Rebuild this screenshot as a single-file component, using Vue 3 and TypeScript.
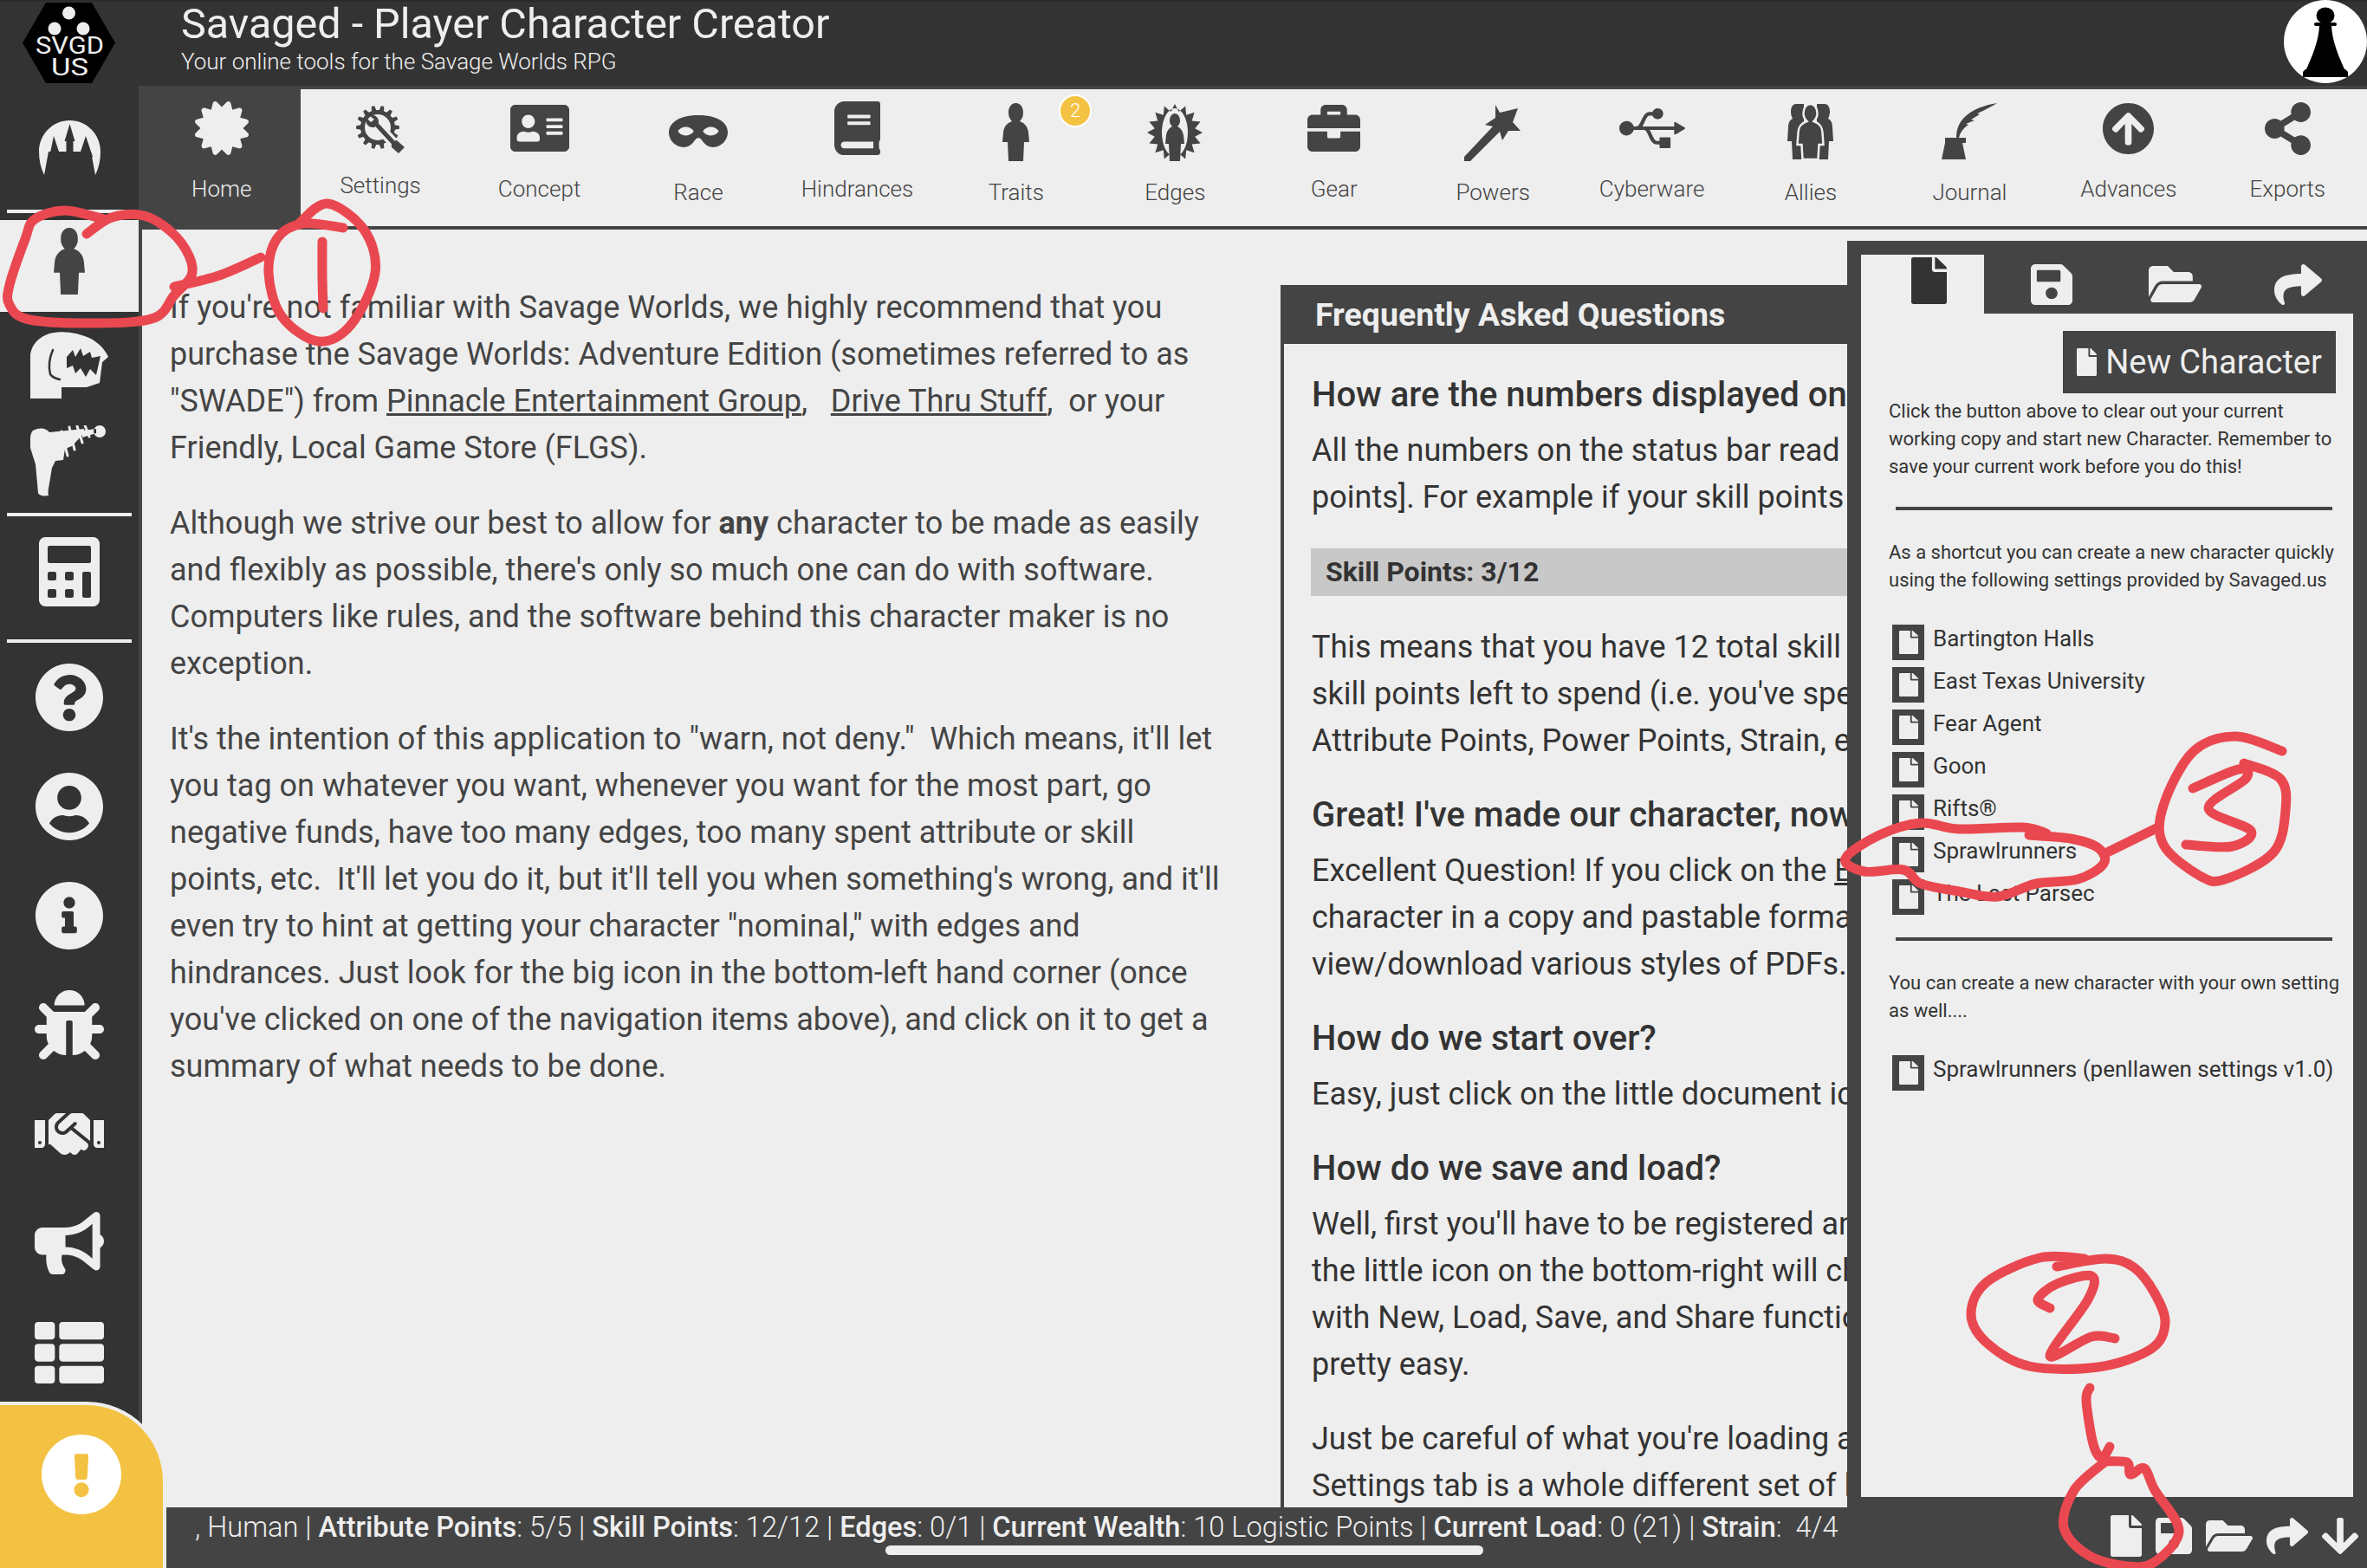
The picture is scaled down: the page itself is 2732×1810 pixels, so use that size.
<template>
  <div class="app">
    <header class="topbar">
      <svg class="logo" viewBox="0 0 107 93">
        <polygon points="27,0 80,0 107,46.5 80,93 27,93 0,46.5" fill="#000" />
        <circle cx="53.5" cy="12" r="7.5" fill="#eee" />
        <circle cx="37" cy="30" r="7.5" fill="#eee" />
        <circle cx="70" cy="30" r="7.5" fill="#eee" />
        <text x="15" y="59" textLength="79" lengthAdjust="spacingAndGlyphs" class="logo-text">SVGD</text>
        <text x="33" y="84" textLength="43" lengthAdjust="spacingAndGlyphs" class="logo-text">US</text>
      </svg>
      <div class="titles">
        <div class="title">Savaged - Player Character Creator</div>
        <div class="subtitle">Your online tools for the Savage Worlds RPG</div>
      </div>
      <svg class="avatar" viewBox="0 0 96 96">
        <circle cx="48" cy="48" r="48" fill="#fff" />
        <ellipse cx="48" cy="18" rx="10.5" ry="9.5" fill="#000" />
        <rect x="35" y="26" width="26" height="4" rx="2" fill="#000" />
        <path d="M41 30h14c1 18 8 34 15 50H26c7-16 14-32 15-50z" fill="#000" />
        <path d="M25 80h46l3 3v6H22v-6z" fill="#000" />
      </svg>
    </header>

    <div class="layout">
      <aside class="sidebar">
        <div class="side-item castle"><AppIcon :icon="icons.castle" :w="71" :h="63" /></div>
        <div class="side-line"></div>
        <div class="side-item active"><AppIcon :icon="icons.person" :w="36" :h="77" /></div>
        <div class="side-item dino"><AppIcon :icon="icons.dino" :w="90" :h="78" /></div>
        <div class="side-item gun"><AppIcon :icon="icons.gun" :w="90" :h="82" /></div>
        <div class="side-line line-two"></div>
        <div class="side-item calc"><AppIcon :icon="icons.calc" :w="70" :h="80" /></div>
        <div class="side-line line-three"></div>
        <div v-for="item in sideItems" :key="item.name" class="side-item plain" :title="item.name">
          <AppIcon :icon="item.icon" :w="item.w" :h="item.h" />
        </div>
      </aside>

      <div class="main">
        <nav class="tabs">
          <div v-for="tab in tabs" :key="tab.name" class="tab" :class="{ current: tab.name === 'Home' }">
            <div class="tab-icon">
              <AppIcon :icon="tab.icon" :w="tab.w" :h="tab.h" :style="{ marginTop: tab.top - 103 + 'px' }" />
            </div>
            <div class="tab-label" :style="{ marginTop: tab.shift + 'px' }">{{ tab.name }}</div>
            <span v-if="tab.badge" class="badge">{{ tab.badge }}</span>
          </div>
        </nav>

        <div class="content">
          <section class="intro">
            <p>
              If you're not familiar with Savage Worlds, we highly recommend that you purchase the Savage Worlds:
              Adventure Edition (sometimes referred to as "SWADE") from <a>Pinnacle Entertainment Group</a>,&nbsp;&nbsp;
              <a>Drive Thru Stuff</a>,&nbsp; or your Friendly, Local Game Store (FLGS).
            </p>
            <p>
              Although we strive our best to allow for <b>any</b> character to be made as easily and flexibly as
              possible, there's only so much one can do with software. Computers like rules, and the software behind
              this character maker is no exception.
            </p>
            <p>
              It's the intention of this application to "warn, not deny."&nbsp; Which means, it'll let you tag on
              whatever you want, whenever you want for the most part, go negative funds, have too many edges, too many
              spent attribute or skill points, etc.&nbsp; It'll let you do it, but it'll tell you when something's
              wrong, and it'll even try to hint at getting your character "nominal," with edges and hindrances. Just
              look for the big icon in the bottom-left hand corner (once you've clicked on one of the navigation items
              above), and click on it to get a summary of what needs to be done.
            </p>
          </section>

          <section class="faq">
            <h2>Frequently Asked Questions</h2>
            <div class="faq-body">
              <h3>How are the numbers displayed on</h3>
              <p>All the numbers on the status bar read<br />points]. For example if your skill points</p>
              <div class="sample">Skill Points: 3/12</div>
              <p>
                This means that you have 12 total skill<br />skill points left to spend (i.e. you've spent<br />
                Attribute Points, Power Points, Strain, etc.
              </p>
              <h3>Great! I've made our character, now</h3>
              <p>
                Excellent Question! If you click on the <a>Export</a><br />character in a copy and pastable format<br />
                view/download various styles of PDFs.
              </p>
              <h3>How do we start over?</h3>
              <p>Easy, just click on the little document icon</p>
              <h3>How do we save and load?</h3>
              <p>
                Well, first you'll have to be registered and<br />the little icon on the bottom-right will change<br />
                with New, Load, Save, and Share functions<br />pretty easy.
              </p>
              <p>Just be careful of what you're loading and<br />Settings tab is a whole different set of load</p>
            </div>
          </section>
        </div>

        <footer class="status">
          <div class="status-text">
            , Human | <b>Attribute Points</b>: 5/5 | <b>Skill Points</b>: 12/12 | <b>Edges</b>: 0/1 |
            <b>Current Wealth</b>: 10 Logistic Points | <b>Current Load</b>: 0 (21) | <b>Strain</b>:&nbsp; 4/4
          </div>
          <div class="status-icons">
            <AppIcon :icon="icons.file" :w="36" :h="48" />
            <AppIcon :icon="icons.save" :w="42" :h="42" />
            <AppIcon :icon="icons.folder" :w="54" :h="36" />
            <AppIcon :icon="icons.share" :w="48" :h="42" />
            <AppIcon :icon="icons.down" :w="42" :h="42" />
          </div>
          <div class="scroll-thumb"></div>
        </footer>
      </div>
    </div>

    <aside class="drawer">
      <div class="drawer-tabs">
        <div class="drawer-tab on"><AppIcon :icon="icons.file" :w="41" :h="54" /></div>
        <div class="drawer-tab"><AppIcon :icon="icons.save" :w="48" :h="47" /></div>
        <div class="drawer-tab"><AppIcon :icon="icons.folder" :w="61" :h="42" /></div>
        <div class="drawer-tab"><AppIcon :icon="icons.share" :w="55" :h="47" /></div>
      </div>
      <div class="drawer-body">
        <div class="new-row">
          <button class="new-btn"><AppIcon :icon="icons.file" :w="23" :h="32" /> New Character</button>
        </div>
        <p class="note">
          Click the button above to clear out your current working copy and start new Character. Remember to save your
          current work before you do this!
        </p>
        <hr />
        <p class="note">As a shortcut you can create a new character quickly using the following settings provided by Savaged.us</p>
        <ul class="settings">
          <li v-for="name in settings" :key="name">
            <span class="file-box"><AppIcon :icon="icons.file" :w="22" :h="27" /></span>{{ name }}
          </li>
        </ul>
        <hr class="hr-two" />
        <p class="note">You can create a new character with your own setting as well....</p>
        <ul class="settings">
          <li>
            <span class="file-box"><AppIcon :icon="icons.file" :w="22" :h="27" /></span>Sprawlrunners (penllawen settings v1.0)
          </li>
        </ul>
      </div>
    </aside>

    <div class="warning">
      <AppIcon :icon="icons.warn" :w="92" :h="92" />
    </div>

    <svg class="scribbles" viewBox="0 0 2732 1810">
      <path v-for="(d, i) in scribbles" :key="i" :d="d" />
    </svg>
  </div>
</template>

<script setup lang="ts">
import { defineComponent, h } from 'vue'

interface Shape {
  d: string
  fill?: string
  stroke?: string
  sw?: number
  rule?: string
}

interface Icon {
  vb: string
  shapes: Shape[]
}

const AppIcon = defineComponent({
  props: {
    icon: { type: Object as () => Icon, required: true },
    w: { type: Number, required: true },
    h: { type: Number, required: true },
  },
  setup(props) {
    return () =>
      h(
        'svg',
        { viewBox: props.icon.vb, width: props.w, height: props.h, preserveAspectRatio: 'none', class: 'app-icon' },
        props.icon.shapes.map((s) =>
          h('path', {
            d: s.d,
            fill: s.fill ?? (s.stroke ? 'none' : 'currentColor'),
            stroke: s.stroke,
            'stroke-width': s.sw,
            'stroke-linecap': s.stroke ? 'round' : undefined,
            'fill-rule': s.rule,
          }),
        ),
      )
  },
})

const fa = (vb: string, d: string): Icon => ({ vb, shapes: [{ d }] })

// toothed ring, used for the settings gear
const gearPath = (cx: number, cy: number, outer: number, inner: number, hole: number, teeth: number) => {
  let d = ''
  const step = (Math.PI * 2) / teeth
  for (let i = 0; i < teeth; i++) {
    const a = i * step
    const pts: [number, number][] = [
      [a - step * 0.3, inner],
      [a - step * 0.16, outer],
      [a + step * 0.16, outer],
      [a + step * 0.3, inner],
    ]
    pts.forEach(([t, r], j) => {
      d += `${i === 0 && j === 0 ? 'M' : 'L'}${(cx + Math.cos(t) * r).toFixed(1)} ${(cy + Math.sin(t) * r).toFixed(1)}`
    })
  }
  d += `ZM${cx - hole} ${cy}a${hole} ${hole} 0 1 0 ${hole * 2} 0a${hole} ${hole} 0 1 0 ${-hole * 2} 0Z`
  return d
}

// spiky oval for the edges icon
const burstPath = (cx: number, cy: number, rx: number, ry: number, spikes: number) => {
  let d = ''
  for (let i = 0; i < spikes * 2; i++) {
    const a = (i / (spikes * 2)) * Math.PI * 2 - Math.PI / 2
    const k = i % 2 === 0 ? 1 : 0.74
    d += `${i === 0 ? 'M' : 'L'}${(cx + Math.cos(a) * rx * k).toFixed(1)} ${(cy + Math.sin(a) * ry * k).toFixed(1)}`
  }
  return `${d}ZM${cx - 15} ${cy}a15 28 0 1 0 30 0a15 28 0 1 0 -30 0Z`
}

const personD =
  'M15.5 0C10 0 7 5 7 11c0 5 2 8 4 10C5 23 1.5 28 1 34L0 45h6l1 22h17l1-22h6l-1-11c-.5-6-4-11-10-13 2-2 4-5 4-10C24 5 21 0 15.5 0z'

const icons: Record<string, Icon> = {
  person: { vb: '0 0 31 67', shapes: [{ d: personD }] },
  castle: {
    vb: '0 0 71 63',
    shapes: [
      { d: 'M35.5 0C16 0 0 16 0 36c0 10 2 19 6 27l5-27h49l5 27c4-8 6-17 6-27C71 16 55 0 35.5 0z', fill: '#eee' },
      { d: 'M35.5 4l6 20h-2v20h-8V24h-2z', fill: '#333' },
      { d: 'M17 18l8 24-1 2h23l-1-2 8-24 8 24-2 2 3 19H11l3-19-2-2z', fill: '#333' },
    ],
  },
  dino: {
    vb: '0 0 90 78',
    shapes: [
      { d: 'M0 78V27C2 15 10 7 22 3 38-1 55 2 70 9c9 5 16 12 20 21l-7 6-3 24-15 5-29 0v13z', fill: '#eee' },
      {
        d: 'M42 30l7-8 3 8 6-10 3 9 8-5 2 7 10-2-5 22-7-7-5 9-6-10-6 6-3-9-7 3z',
        fill: '#333',
      },
      { d: 'M26 22c-4 9-5 20-3 28 2 3 6 5 11 6', stroke: '#333', sw: 2.5 },
    ],
  },
  gun: {
    vb: '0 0 90 82',
    shapes: [
      {
        d: 'M3 6c8-4 15-3 19 2l40-4v5L48 24l-8 3-2 13-9 1-4 8-3 18c-1 6-2 10-1 14-6 1-11 0-12-3L6 45 0 26C-1 16 0 9 3 6z',
        fill: '#eee',
      },
      { d: 'M45 2l6 26M54 1l6 19M63 0l5 13M36 7l7 28', stroke: '#eee', sw: 3 },
      { d: 'M80 0a7 7 0 1 0 .1 14A7 7 0 0 0 80 0zM60 6l16-2v5l-16 5z', fill: '#eee' },
    ],
  },
  calc: fa(
    '0 0 448 512',
    'M400 0H48C22.4 0 0 22.4 0 48v416c0 25.6 22.4 48 48 48h352c25.6 0 48-22.4 48-48V48c0-25.6-22.4-48-48-48zM128 435.2c0 6.4-6.4 12.8-12.8 12.8H76.8c-6.4 0-12.8-6.4-12.8-12.8v-38.4c0-6.4 6.4-12.8 12.8-12.8h38.4c6.4 0 12.8 6.4 12.8 12.8v38.4zm0-128c0 6.4-6.4 12.8-12.8 12.8H76.8c-6.4 0-12.8-6.4-12.8-12.8v-38.4c0-6.4 6.4-12.8 12.8-12.8h38.4c6.4 0 12.8 6.4 12.8 12.8v38.4zm128 128c0 6.4-6.4 12.8-12.8 12.8h-38.4c-6.4 0-12.8-6.4-12.8-12.8v-38.4c0-6.4 6.4-12.8 12.8-12.8h38.4c6.4 0 12.8 6.4 12.8 12.8v38.4zm0-128c0 6.4-6.4 12.8-12.8 12.8h-38.4c-6.4 0-12.8-6.4-12.8-12.8v-38.4c0-6.4 6.4-12.8 12.8-12.8h38.4c6.4 0 12.8 6.4 12.8 12.8v38.4zm128 128c0 6.4-6.4 12.8-12.8 12.8h-38.4c-6.4 0-12.8-6.4-12.8-12.8V268.8c0-6.4 6.4-12.8 12.8-12.8h38.4c6.4 0 12.8 6.4 12.8 12.8v166.4zm0-256c0 6.4-6.4 12.8-12.8 12.8H76.8c-6.4 0-12.8-6.4-12.8-12.8V76.8C64 70.4 70.4 64 76.8 64h294.4c6.4 0 12.8 6.4 12.8 12.8v102.4z',
  ),
  file: fa(
    '0 0 384 512',
    'M224 136V0H24C10.7 0 0 10.7 0 24v464c0 13.3 10.7 24 24 24h336c13.3 0 24-10.7 24-24V160H248c-13.2 0-24-10.8-24-24zm160-14.1v6.1H256V0h6.1c6.4 0 12.5 2.5 17 7l97.9 98c4.5 4.5 7 10.6 7 16.9z',
  ),
  save: fa(
    '0 32 448 448',
    'M433.941 129.941l-83.882-83.882A48 48 0 0 0 316.118 32H48C21.49 32 0 53.49 0 80v352c0 26.51 21.49 48 48 48h352c26.51 0 48-21.49 48-48V163.882a48 48 0 0 0-14.059-33.941zM224 416c-35.346 0-64-28.654-64-64 0-35.346 28.654-64 64-64s64 28.654 64 64c0 35.346-28.654 64-64 64zm96-304.52V212c0 6.627-5.373 12-12 12H76c-6.627 0-12-5.373-12-12V108c0-6.627 5.373-12 12-12h228.52c3.183 0 6.235 1.264 8.485 3.515l3.48 3.48A11.996 11.996 0 0 1 320 111.48z',
  ),
  folder: fa(
    '0 64 576 384',
    'M572.694 292.093L500.27 416.248A63.997 63.997 0 0 1 444.989 448H45.025c-18.523 0-30.064-20.093-20.731-36.093l72.424-124.155A64 64 0 0 1 152 256h399.964c18.523 0 30.064 20.093 20.73 36.093zM152 224h328v-48c0-26.51-21.49-48-48-48H272l-64-64H48C21.49 64 0 85.49 0 112v278.046l69.077-118.418C86.214 242.25 117.989 224 152 224z',
  ),
  share: fa(
    '0 32 512 448',
    'M503.691 189.836L327.687 37.851C312.281 24.546 288 35.347 288 56.015v80.053C127.371 137.907 0 170.1 0 322.326c0 61.441 39.581 122.309 83.333 154.132 13.653 9.931 33.111-2.533 28.077-18.631C66.066 312.814 132.917 274.316 288 272.085V360c0 20.7 24.3 31.453 39.687 18.164l176.004-152c11.071-9.562 11.086-26.753 0-36.328z',
  ),
  down: fa(
    '6 32 436 448',
    'M413.1 222.5l22.2 22.2c9.4 9.4 9.4 24.6 0 33.9L241 473c-9.4 9.4-24.6 9.4-33.9 0L12.7 278.6c-9.4-9.4-9.4-24.6 0-33.9l22.2-22.2c9.5-9.5 25-9.3 34.3.4L184 343.4V56c0-13.3 10.7-24 24-24h32c13.3 0 24 10.7 24 24v287.4l114.8-120.5c9.3-9.8 24.8-10 34.3-.4z',
  ),
  warn: fa(
    '8 8 496 496',
    'M504 256c0 136.997-111.043 248-248 248S8 392.997 8 256C8 119.083 119.043 8 256 8s248 111.083 248 248zm-248 50c-25.405 0-46 20.595-46 46s20.595 46 46 46 46-20.595 46-46-20.595-46-46-46zm-43.673-165.346l7.418 136c.347 6.364 5.609 11.346 11.982 11.346h48.546c6.373 0 11.635-4.982 11.982-11.346l7.418-136c.375-6.874-5.098-12.654-11.982-12.654h-63.383c-6.884 0-12.356 5.78-11.981 12.654z',
  ),
}

const sideItems = [
  {
    name: 'help',
    w: 78,
    h: 78,
    icon: fa(
      '8 8 496 496',
      'M504 256c0 136.997-111.043 248-248 248S8 392.997 8 256C8 119.083 119.043 8 256 8s248 111.083 248 248zM262.655 90c-54.497 0-89.255 22.957-116.549 63.758-3.536 5.286-2.353 12.415 2.715 16.258l34.699 26.31c5.205 3.947 12.621 3.008 16.665-2.122 17.864-22.658 30.113-35.797 57.303-35.797 20.429 0 45.698 13.148 45.698 32.958 0 14.976-12.363 22.667-32.534 33.976C247.128 238.528 216 254.941 216 296v4c0 6.627 5.373 12 12 12h56c6.627 0 12-5.373 12-12v-1.333c0-28.462 83.186-29.647 83.186-106.667 0-58.002-60.165-102-116.531-102zM256 338c-25.365 0-46 20.635-46 46 0 25.364 20.635 46 46 46s46-20.636 46-46c0-25.365-20.635-46-46-46z',
    ),
  },
  {
    name: 'user',
    w: 78,
    h: 78,
    icon: fa(
      '0 8 496 496',
      'M248 8C111 8 0 119 0 256s111 248 248 248 248-111 248-248S385 8 248 8zm0 96c48.6 0 88 39.4 88 88s-39.4 88-88 88-88-39.4-88-88 39.4-88 88-88zm0 344c-58.7 0-111.3-26.6-146.5-68.2 18.8-35.4 55.6-59.8 98.5-59.8 2.4 0 4.8.4 7.1 1.1 13 4.2 26.6 6.9 40.9 6.9 14.3 0 28-2.7 40.9-6.9 2.3-.7 4.7-1.1 7.1-1.1 42.9 0 79.7 24.4 98.5 59.8C359.3 421.4 306.7 448 248 448z',
    ),
  },
  {
    name: 'info',
    w: 78,
    h: 78,
    icon: fa(
      '8 8 496 496',
      'M256 8C119.043 8 8 119.083 8 256c0 136.997 111.043 248 248 248s248-111.003 248-248C504 119.083 392.957 8 256 8zm0 110c23.196 0 42 18.804 42 42s-18.804 42-42 42-42-18.804-42-42 18.804-42 42-42zm56 254c0 6.627-5.373 12-12 12h-88c-6.627 0-12-5.373-12-12v-24c0-6.627 5.373-12 12-12h12v-64h-12c-6.627 0-12-5.373-12-12v-24c0-6.627 5.373-12 12-12h64c6.627 0 12 5.373 12 12v100h12c6.627 0 12 5.373 12 12v24z',
    ),
  },
  {
    name: 'bug',
    w: 80,
    h: 80,
    icon: fa(
      '0 0 512 512',
      'M511.988 288.9c-.478 17.43-15.217 31.1-32.653 31.1H424v16c0 21.864-4.882 42.584-13.6 61.145l60.228 60.228c12.496 12.497 12.496 32.758 0 45.255-12.498 12.497-32.759 12.496-45.256 0l-54.736-54.736C345.886 467.965 314.351 480 280 480V236c0-6.627-5.373-12-12-12h-24c-6.627 0-12 5.373-12 12v244c-34.351 0-65.886-12.035-90.636-32.108l-54.736 54.736c-12.498 12.497-32.759 12.496-45.256 0-12.496-12.497-12.496-32.758 0-45.255l60.228-60.228C92.882 378.584 88 357.864 88 336v-16H32.666C15.23 320 .491 306.33.013 288.9-.484 270.816 14.028 256 32 256h56v-58.745l-46.628-46.628c-12.496-12.497-12.496-32.758 0-45.255 12.498-12.497 32.758-12.497 45.256 0L141.255 160h229.489l54.627-54.627c12.498-12.497 32.758-12.497 45.256 0 12.496 12.497 12.496 32.758 0 45.255L424 197.255V256h56c17.972 0 32.484 14.816 31.988 32.9zM257 0c-61.856 0-112 50.144-112 112h224C369 50.144 318.856 0 257 0z',
    ),
  },
  {
    name: 'partners',
    w: 80,
    h: 48,
    icon: fa(
      '0 64 640 384',
      'M434.7 64h-85.9c-8 0-15.7 3-21.6 8.4l-98.3 90c-.1.1-.2.3-.3.4-16.6 15.6-16.3 40.5-2.1 56 12.7 13.9 39.4 17.6 56.1 2.7.1-.1.3-.1.4-.2l79.9-73.2c6.5-5.9 16.7-5.5 22.6 1 6 6.5 5.5 16.6-1 22.6l-26.1 23.9L504 313.8c2.9 2.4 5.5 5 7.9 7.7V128l-54.6-54.6c-5.9-6-14.1-9.4-22.6-9.4zM544 128.2v223.9c0 17.7 14.3 32 32 32h64V128.2h-96zm48 223.9c-8.8 0-16-7.2-16-16s7.2-16 16-16 16 7.2 16 16-7.2 16-16 16zM0 384h64c17.7 0 32-14.3 32-32V128.2H0V384zm48-63.9c8.8 0 16 7.2 16 16s-7.2 16-16 16-16-7.2-16-16c0-8.9 7.2-16 16-16zm435.9 18.6L334.6 217.5l-30 27.5c-29.7 27.1-75.2 24.5-101.7-4.4-26.9-29.4-24.8-74.9 4.4-101.7L289.1 64h-83.8c-8.5 0-16.6 3.4-22.6 9.4L128 128v223.9h18.3l90.5 81.9c27.4 22.3 67.7 18.1 90-9.3l.2-.2 17.9 15.5c15.9 13 39.4 10.5 52.3-5.4l31.4-38.6 5.4 4.4c13.7 11.1 33.9 9.1 45-4.7l9.5-11.7c11.2-13.8 9.1-33.9-4.6-45.1z',
    ),
  },
  {
    name: 'news',
    w: 80,
    h: 72,
    icon: fa(
      '0 0 576 512',
      'M576 240c0-23.63-12.95-44.04-32-55.12V32.01C544 23.26 537.02 0 512 0c-7.12 0-14.19 2.38-19.98 7.02l-85.03 68.03C364.28 109.19 310.22 128 256 128H64c-35.35 0-64 28.65-64 64v96c0 35.35 28.65 64 64 64h33.7c-1.39 10.48-2.18 21.14-2.18 32 0 39.77 9.26 77.35 25.56 110.94 5.19 10.69 16.52 17.06 28.4 17.06h74.28c26.05 0 41.69-29.84 25.9-50.56-16.4-21.52-26.15-48.36-26.15-77.44 0-11.11 1.62-21.79 4.41-32H256c54.22 0 108.28 18.81 150.98 52.95l85.03 68.03a32.023 32.023 0 0 0 19.98 7.02c24.92 0 32-22.78 32-32V295.13C563.05 284.04 576 263.63 576 240zm-96 141.42l-33.05-26.44C392.95 311.78 325.12 288 256 288v-96c69.12 0 136.95-23.78 190.95-66.98L480 98.58v282.84z',
    ),
  },
  {
    name: 'list',
    w: 80,
    h: 71,
    icon: fa(
      '0 32 512 448',
      'M149.333 216v80c0 13.255-10.745 24-24 24H24c-13.255 0-24-10.745-24-24v-80c0-13.255 10.745-24 24-24h101.333c13.255 0 24 10.745 24 24zM0 376v80c0 13.255 10.745 24 24 24h101.333c13.255 0 24-10.745 24-24v-80c0-13.255-10.745-24-24-24H24c-13.255 0-24 10.745-24 24zM125.333 32H24C10.745 32 0 42.745 0 56v80c0 13.255 10.745 24 24 24h101.333c13.255 0 24-10.745 24-24V56c0-13.255-10.745-24-24-24zm80 448H488c13.255 0 24-10.745 24-24v-80c0-13.255-10.745-24-24-24H205.333c-13.255 0-24 10.745-24 24v80c0 13.255 10.745 24 24 24zm-24-424v80c0 13.255 10.745 24 24 24H488c13.255 0 24-10.745 24-24V56c0-13.255-10.745-24-24-24H205.333c-13.255 0-24 10.745-24 24zm24 264H488c13.255 0 24-10.745 24-24v-80c0-13.255-10.745-24-24-24H205.333c-13.255 0-24 10.745-24 24v80c0 13.255 10.745 24 24 24z',
    ),
  },
]

const tabs: { name: string; icon: Icon; w: number; h: number; top: number; shift: number; badge?: number }[] = [
  {
    name: 'Home',
    w: 62,
    h: 62,
    top: 117,
    shift: 0,
    icon: fa(
      '0 0 512 512',
      'M458.622 255.92l45.985-45.005c13.708-12.977 7.316-36.039-10.664-40.339l-62.65-15.99 17.661-62.015c4.991-17.838-11.829-34.663-29.661-29.671l-61.994 17.667-15.984-62.671C337.085.197 313.765-6.276 300.99 7.228L256 53.57 211.011 7.229c-12.63-13.351-36.047-7.234-40.325 10.668l-15.984 62.671-61.995-17.667C74.87 57.907 58.056 74.738 63.046 92.572l17.661 62.015-62.65 15.99C.069 174.878-6.31 197.944 7.392 210.915l45.985 45.005-45.985 45.004c-13.708 12.977-7.316 36.039 10.664 40.339l62.65 15.99-17.661 62.015c-4.991 17.838 11.829 34.663 29.661 29.671l61.994-17.667 15.984 62.671c4.439 18.575 27.696 24.018 40.325 10.668L256 458.61l44.989 46.001c12.5 13.488 35.987 7.486 40.325-10.668l15.984-62.671 61.994 17.667c17.836 4.994 34.651-11.837 29.661-29.671l-17.661-62.015 62.65-15.99c17.987-4.302 24.366-27.367 10.664-40.339l-45.984-45.004z',
    ),
  },
  {
    name: 'Settings',
    w: 56,
    h: 56,
    top: 122,
    shift: -4,
    icon: {
      vb: '0 0 56 56',
      shapes: [
        { d: gearPath(25, 25, 25, 20, 15, 14), rule: 'evenodd' },
        { d: 'M22 20l24 26', stroke: '#eee', sw: 12 },
        { d: 'M22 20l25 27', stroke: 'currentColor', sw: 5 },
        { d: 'M15 11c5-2 12 2 11 9l-5 5c-7 1-11-5-9-11l5 5 4-3z' },
        { d: 'M47 40c-4 0-7 4-6 8l8 7 7-7z' },
      ],
    },
  },
  {
    name: 'Concept',
    w: 68,
    h: 54,
    top: 121,
    shift: 0,
    icon: fa(
      '0 32 576 448',
      'M528 32H48C21.5 32 0 53.5 0 80v352c0 26.5 21.5 48 48 48h480c26.5 0 48-21.5 48-48V80c0-26.5-21.5-48-48-48zm-352 96c35.3 0 64 28.7 64 64s-28.7 64-64 64-64-28.7-64-64 28.7-64 64-64zm112 236.8c0 10.6-10 19.2-22.4 19.2H86.4C74 384 64 375.4 64 364.8v-19.2c0-31.8 30.1-57.6 67.2-57.6h5c12.3 5.1 25.7 8 39.8 8s27.6-2.9 39.8-8h5c37.1 0 67.2 25.8 67.2 57.6v19.2zM512 312c0 4.4-3.6 8-8 8H360c-4.4 0-8-3.6-8-8v-16c0-4.4 3.6-8 8-8h144c4.4 0 8 3.6 8 8v16zm0-64c0 4.4-3.6 8-8 8H360c-4.4 0-8-3.6-8-8v-16c0-4.4 3.6-8 8-8h144c4.4 0 8 3.6 8 8v16zm0-64c0 4.4-3.6 8-8 8H360c-4.4 0-8-3.6-8-8v-16c0-4.4 3.6-8 8-8h144c4.4 0 8 3.6 8 8v16z',
    ),
  },
  {
    name: 'Race',
    w: 68,
    h: 37,
    top: 133,
    shift: 4,
    icon: fa(
      '0 64 640 384',
      'M320.67 64c-442.6 0-357.57 384-158.46 384 39.9 0 77.47-20.69 101.42-55.86l25.73-37.79c15.66-22.99 46.97-22.99 62.63 0l25.73 37.79C401.66 427.31 439.23 448 479.13 448c189.86 0 290.63-384-158.46-384zM184 308.36c-41.06 0-67.76-25.66-80.08-41.05-5.23-6.53-5.23-16.09 0-22.63 12.32-15.4 39.01-41.05 80.08-41.05s67.76 25.66 80.08 41.05c5.23 6.53 5.23 16.09 0 22.63-12.32 15.39-39.02 41.05-80.08 41.05zm272 0c-41.06 0-67.76-25.66-80.08-41.05-5.23-6.53-5.23-16.09 0-22.63 12.32-15.4 39.01-41.05 80.08-41.05s67.76 25.66 80.08 41.05c5.23 6.53 5.23 16.09 0 22.63-12.32 15.39-39.02 41.05-80.08 41.05z',
    ),
  },
  {
    name: 'Hindrances',
    w: 53,
    h: 62,
    top: 117,
    shift: 0,
    icon: fa(
      '0 0 448 512',
      'M448 360V24c0-13.3-10.7-24-24-24H96C43 0 0 43 0 96v320c0 53 43 96 96 96h328c13.3 0 24-10.7 24-24v-16c0-7.5-3.5-14.3-8.9-18.7-4.2-15.4-4.2-59.3 0-74.7 5.4-4.3 8.9-11.1 8.9-18.6zM128 134c0-3.3 2.7-6 6-6h212c3.3 0 6 2.7 6 6v20c0 3.3-2.7 6-6 6H134c-3.3 0-6-2.7-6-6v-20zm0 64c0-3.3 2.7-6 6-6h212c3.3 0 6 2.7 6 6v20c0 3.3-2.7 6-6 6H134c-3.3 0-6-2.7-6-6v-20zm253.4 250H96c-17.7 0-32-14.3-32-32 0-17.6 14.4-32 32-32h285.4c-1.9 17.1-1.9 46.9 0 64z',
    ),
  },
  { name: 'Traits', w: 31, h: 67, top: 119, shift: 4, badge: 2, icon: icons.person },
  {
    name: 'Edges',
    w: 64,
    h: 66,
    top: 120,
    shift: 4,
    icon: {
      vb: '0 0 64 66',
      shapes: [
        { d: burstPath(32, 33, 32, 33, 16), rule: 'evenodd' },
        { d: 'M32 11c-3.5 0-6 4-6 8 0 3 1 5 3 7-4 2-6 5-7 10l-1 10h4l1 20h12l1-20h4l-1-10c-1-5-3-8-7-10 2-2 3-4 3-7 0-4-2.5-8-6-8z' },
      ],
    },
  },
  {
    name: 'Gear',
    w: 61,
    h: 54,
    top: 121,
    shift: 0,
    icon: fa(
      '0 32 512 448',
      'M320 336c0 8.84-7.16 16-16 16h-96c-8.84 0-16-7.16-16-16v-48H0v144c0 25.6 22.4 48 48 48h416c25.6 0 48-22.4 48-48V288H320v48zm144-208h-80V80c0-25.6-22.4-48-48-48H176c-25.6 0-48 22.4-48 48v48H48c-25.6 0-48 22.4-48 48v80h512v-80c0-25.6-22.4-48-48-48zm-144 0H192V96h128v32z',
    ),
  },
  {
    name: 'Powers',
    w: 67,
    h: 65,
    top: 121,
    shift: 4,
    icon: {
      vb: '0 0 67 65',
      shapes: [{ d: 'M36 0l5 9 21-5-6 16 9 10-14 0-7 11-3-10L7 65H0v-5l33-35-9-2 12-8z' }],
    },
  },
  {
    name: 'Cyberware',
    w: 76,
    h: 46,
    top: 125,
    shift: 0,
    icon: fa(
      '0 60 641.5 392',
      'M641.5 256c0 3.1-1.7 6.1-4.5 7.5L547.9 317c-1.4.8-2.8 1.4-4.5 1.4-1.4 0-3.1-.3-4.5-1.1-2.8-1.7-4.5-4.5-4.5-7.8v-35.6H295.7c25.3 39.6 40.5 106.9 69.6 106.9H392V354c0-5 3.9-8.9 8.9-8.9H490c5 0 8.9 3.9 8.9 8.9v89.1c0 5-3.9 8.9-8.9 8.9h-89.1c-5 0-8.9-3.9-8.9-8.9v-26.7h-26.7c-75.4 0-81.1-142.5-124.7-142.5H140.3c-8.1 30.6-35.9 53.5-69 53.5C32 327.3 0 295.3 0 256s32-71.3 71.3-71.3c33.1 0 61 22.8 69 53.5 39.1 0 43.9 9.5 74.6-60.4C255 88.7 273 95.7 323.8 95.7c7.5-20.9 27-35.6 50.4-35.6 29.5 0 53.5 23.9 53.5 53.5s-23.9 53.5-53.5 53.5c-23.4 0-42.9-14.8-50.4-35.6H294c-29.1 0-44 67.4-69.3 106.9h310.1v-35.6c0-3.3 1.7-6.1 4.5-7.8 2.8-1.7 6.4-1.4 8.9.3l89.1 53.5c2.8 1.1 4.5 4.1 4.5 7.2z',
    ),
  },
  {
    name: 'Allies',
    w: 53,
    h: 64,
    top: 120,
    shift: 4,
    icon: {
      vb: '0 0 53 64',
      shapes: [
        {
          d: 'M10 0c-4 0-6 4-6 9 0 3 1 6 2 8-4 2-5 6-5 10L0 43h5l1 21h13V0zM43 0c4 0 6 4 6 9 0 3-1 6-2 8 4 2 5 6 5 10l1 16h-5l-1 21H34V0z',
        },
        {
          d: 'M26.5 0c-5 0-8 5-8 11 0 4 2 7 4 9-6 2-10 7-10 13l-1 14h5l1 17h18l1-17h5l-1-14c0-6-4-11-10-13 2-2 4-5 4-9 0-6-3-11-8-11z',
          stroke: '#eee',
          sw: 2.5,
          fill: 'currentColor',
        },
      ],
    },
  },
  {
    name: 'Journal',
    w: 64,
    h: 65,
    top: 119,
    shift: 4,
    icon: {
      vb: '0 0 64 65',
      shapes: [
        { d: 'M64 0C46 3 32 9 24 19c-5 6-7 13-7 21h3c2-7 5-11 11-15l-3-1 10-4-4-1 10-6-3-1C48 9 56 5 64 0z' },
        { d: 'M4 40h24v6h-4l4 19H0l4-19H4z' },
      ],
    },
  },
  {
    name: 'Advances',
    w: 59,
    h: 59,
    top: 119,
    shift: 0,
    icon: fa(
      '8 8 496 496',
      'M8 256C8 119 119 8 256 8s248 111 248 248-111 248-248 248S8 393 8 256zm143.6 28.9l72.4-75.5V392c0 13.3 10.7 24 24 24h16c13.3 0 24-10.7 24-24V209.4l72.4 75.5c9.3 9.7 24.8 9.9 34.3.4l10.9-11c9.4-9.4 9.4-24.6 0-33.9L273 107.7c-9.4-9.4-24.6-9.4-33.9 0L106.3 240.4c-9.4 9.4-9.4 24.6 0 33.9l10.9 11c9.6 9.5 25.1 9.3 34.4-.4z',
    ),
  },
  {
    name: 'Exports',
    w: 53,
    h: 61,
    top: 118,
    shift: 0,
    icon: fa(
      '0 0 448 512',
      'M352 320c-22.608 0-43.387 7.819-59.79 20.895l-102.486-64.054a96.551 96.551 0 0 0 0-41.683l102.486-64.054C308.613 184.181 329.392 192 352 192c53.019 0 96-42.981 96-96S405.019 0 352 0s-96 42.981-96 96c0 7.158.79 14.13 2.276 20.841L155.79 180.895C139.387 167.819 118.608 160 96 160c-53.019 0-96 42.981-96 96s42.981 96 96 96c22.608 0 43.387-7.819 59.79-20.895l102.486 64.054A96.301 96.301 0 0 0 256 416c0 53.019 42.981 96 96 96s96-42.981 96-96-42.981-96-96-96z',
    ),
  },
]

const settings = [
  'Bartington Halls',
  'East Texas University',
  'Fear Agent',
  'Goon',
  'Rifts®',
  'Sprawlrunners',
  'The Last Parsec',
]

// pen marks drawn over the screenshot
const smooth = (pts: number[][]) => {
  let d = `M${pts[0][0]} ${pts[0][1]}`
  for (let i = 0; i < pts.length - 1; i++) {
    const p0 = pts[Math.max(i - 1, 0)]
    const p1 = pts[i]
    const p2 = pts[i + 1]
    const p3 = pts[Math.min(i + 2, pts.length - 1)]
    const c1x = p1[0] + (p2[0] - p0[0]) / 6
    const c1y = p1[1] + (p2[1] - p0[1]) / 6
    const c2x = p2[0] - (p3[0] - p1[0]) / 6
    const c2y = p2[1] - (p3[1] - p1[1]) / 6
    d += `C${c1x.toFixed(1)} ${c1y.toFixed(1)} ${c2x.toFixed(1)} ${c2y.toFixed(1)} ${p2[0]} ${p2[1]}`
  }
  return d
}

const scribbles = [
  [[100, 270], [129, 251], [166, 249], [198, 268], [218, 295], [221, 318], [201, 341], [178, 367], [115, 373], [34, 369], [11, 352], [11, 329], [29, 276], [40, 253], [75, 243], [120, 253]],
  [[201, 331], [253, 318], [301, 297]],
  [[396, 263], [350, 258], [320, 275], [310, 315], [325, 365], [367, 394], [405, 375], [433, 315], [420, 265], [378, 235], [345, 258]],
  [[372, 279], [372, 320], [373, 356]],
  [[2362, 962], [2334, 955], [2261, 957], [2217, 950], [2169, 964], [2130, 991], [2152, 1006], [2197, 1004], [2217, 1020], [2261, 1029], [2306, 1035], [2350, 1020], [2398, 1015], [2428, 997], [2422, 979], [2390, 968], [2342, 964]],
  [[2428, 986], [2489, 956]],
  [[2634, 867], [2580, 850], [2531, 868], [2497, 930], [2497, 975], [2539, 1011], [2568, 1015], [2624, 984], [2638, 935], [2632, 899], [2590, 881]],
  [[2531, 910], [2584, 888], [2592, 899], [2549, 933], [2598, 959], [2576, 977], [2523, 975]],
  [[2374, 1462], [2430, 1453], [2463, 1463], [2487, 1493], [2499, 1527], [2483, 1557], [2422, 1578], [2342, 1577], [2293, 1550], [2275, 1517], [2293, 1480], [2354, 1452], [2406, 1453]],
  [[2366, 1510], [2352, 1500], [2374, 1482], [2414, 1473], [2410, 1500], [2366, 1565], [2414, 1543], [2441, 1545]],
  [[2412, 1602], [2408, 1617], [2416, 1667], [2426, 1683], [2435, 1670]],
  [[2430, 1687], [2394, 1720], [2382, 1763], [2410, 1795], [2455, 1808], [2487, 1803], [2515, 1767], [2487, 1720], [2475, 1695], [2459, 1702], [2455, 1688], [2430, 1687]],
].map(smooth)
</script>

<style scoped>
.app {
  position: relative;
  width: 2732px;
  height: 1810px;
  overflow: hidden;
  background: #eee;
  color: #333;
  font-family: Roboto, "Liberation Sans", sans-serif;
  font-size: 36px;
  line-height: 54px;
}

.topbar {
  height: 99px;
  background: #333;
  box-shadow: inset 0 2px #2b2b2b;
  display: flex;
  color: #eee;
}
.logo {
  width: 107px;
  height: 93px;
  margin: 3px 76px 0 26px;
  flex: none;
}
.logo-text {
  font-size: 28px;
  fill: #eee;
}
.titles {
  flex: 1;
}
.title {
  font-size: 48.5px;
  line-height: 56px;
}
.subtitle {
  font-size: 26px;
  font-weight: 300;
  line-height: 34px;
  margin-top: -2px;
}
.avatar {
  width: 96px;
  height: 96px;
  flex: none;
}

.layout {
  display: flex;
  height: 1711px;
}

.sidebar {
  width: 160px;
  flex: none;
  background: #333;
  border-right: 4px solid #444;
  color: #eee;
  display: flex;
  flex-direction: column;
}
.side-item {
  display: flex;
  align-items: center;
  justify-content: center;
}
.castle {
  height: 143px;
}
.side-line {
  height: 4px;
  background: #eee;
  margin: 0 8px 8px;
  flex: none;
}
.active {
  height: 106px;
  background: #eee;
  color: #444;
  padding-bottom: 12px;
  box-sizing: border-box;
}
.dino {
  height: 122px;
}
.gun {
  height: 100px;
  margin-bottom: 10px;
}
.line-two {
  margin-bottom: 0;
}
.calc {
  height: 128px;
  margin-bottom: 14px;
}
.line-three {
  margin-bottom: 0;
}
.plain {
  height: 126px;
  flex: none;
}

.main {
  flex: 1;
  min-width: 0;
  display: flex;
  flex-direction: column;
}

.tabs {
  height: 166px;
  box-sizing: border-box;
  border-top: 4px solid #444;
  border-bottom: 4px solid #444;
  display: grid;
  grid-template-columns: repeat(14, 1fr);
  flex: none;
}
.tab {
  position: relative;
  text-align: center;
  color: #444;
}
.tab.current {
  background: #444;
  color: #eee;
  margin-left: -3px;
  padding-left: 3px;
}
.tab-icon {
  height: 98px;
  display: flex;
  justify-content: center;
  align-items: flex-start;
}
.tab-label {
  font-size: 26px;
  font-weight: 300;
  line-height: 34px;
}
.badge {
  position: absolute;
  left: 141px;
  top: 6px;
  width: 34px;
  height: 34px;
  border: 2px solid #fff;
  border-radius: 50%;
  background: #f4c242;
  color: #fff;
  font-size: 22px;
  font-weight: 300;
  line-height: 34px;
}

.content {
  flex: 1;
  min-height: 0;
  display: flex;
  overflow: hidden;
}
.intro {
  width: 1247px;
  flex: none;
  padding: 63px 0 0 32px;
  box-sizing: border-box;
  margin-right: 67px;
  color: #444;
}
.intro p {
  margin: 0 0 33px;
}
.intro a,
.faq a {
  text-decoration: underline;
}
.intro b {
  font-weight: 700;
}

.faq {
  flex: 1;
  margin-top: 64px;
  border-left: 4px solid #444;
  white-space: nowrap;
  min-width: 0;
}
.faq h2 {
  margin: 0;
  height: 68px;
  background: #444;
  color: #eee;
  font-size: 37.5px;
  font-weight: 700;
  line-height: 68px;
  padding-left: 36px;
}
.faq-body {
  padding-left: 32px;
}
.faq h3 {
  margin: 32px 0 10px;
  font-size: 40px;
  font-weight: 500;
  line-height: 54px;
}
.faq p {
  margin: 0 0 32px;
}
.sample {
  height: 55px;
  background: #c8c8c8;
  margin: 32px 0 32px -1px;
  padding-left: 17px;
  font-size: 32px;
  font-weight: 700;
  line-height: 55px;
}

.status {
  position: relative;
  height: 70px;
  flex: none;
  margin-left: 28px;
  background: #444;
  color: #eee;
  display: flex;
  justify-content: space-between;
  z-index: 3;
}
.status-text {
  padding-left: 33px;
  font-size: 32.6px;
  font-weight: 300;
  line-height: 46px;
  white-space: nowrap;
}
.status-text b {
  font-weight: 500;
}
.status-icons {
  display: flex;
  align-items: center;
  gap: 16px;
  padding: 0 10px 4px 0;
}
.scroll-thumb {
  position: absolute;
  left: 830px;
  top: 44px;
  width: 690px;
  height: 11px;
  border-radius: 6px;
  background: #eee;
}

.drawer {
  position: absolute;
  left: 2132px;
  top: 278px;
  width: 600px;
  height: 1462px;
  box-sizing: border-box;
  padding: 16px 16px 12px;
  background: #444;
  display: flex;
  flex-direction: column;
  z-index: 2;
}
.drawer-tabs {
  display: flex;
  height: 68px;
  flex: none;
  color: #eee;
}
.drawer-tab {
  width: 142.5px;
  box-sizing: border-box;
  padding-left: 14px;
  display: flex;
  align-items: center;
  justify-content: center;
}
.drawer-tab.on {
  background: #eee;
  color: #333;
  align-items: flex-start;
  padding-top: 3px;
}
.drawer-body {
  flex: 1;
  background: #eee;
  padding: 20px 20px 0 32px;
}
.new-row {
  display: flex;
  justify-content: flex-end;
}
.new-btn {
  width: 315px;
  height: 72px;
  background: #444;
  color: #eee;
  border: 0;
  padding: 0;
  font-family: inherit;
  font-size: 38px;
  font-weight: 400;
  display: flex;
  align-items: center;
  justify-content: center;
  gap: 10px;
  white-space: nowrap;
}
.note {
  margin: 5px -16px 0 0;
  font-size: 22px;
  line-height: 32px;
  font-weight: 400;
}
hr {
  border: 0;
  height: 4px;
  background: #444;
  margin: 30px 4px 33px 8px;
}
hr.hr-two {
  margin-top: 26px;
}
hr + .note {
  margin-top: 0;
}
.settings {
  list-style: none;
  margin: 35px 0 0 4px;
  padding: 0;
}
.settings li {
  display: flex;
  gap: 10px;
  height: 41px;
  margin-bottom: 8px;
  font-size: 26px;
  font-weight: 400;
  line-height: 32px;
  white-space: nowrap;
}
.file-box {
  width: 37px;
  height: 41px;
  flex: none;
  background: #444;
  color: #eee;
  display: flex;
  align-items: center;
  justify-content: center;
}

.warning {
  position: absolute;
  left: 0;
  top: 1618px;
  width: 192px;
  height: 192px;
  box-sizing: border-box;
  background: #f4c242;
  border-top: 4px solid #eee;
  border-right: 4px solid #eee;
  border-top-right-radius: 92px;
  color: #fff;
  padding: 34px 0 0 48px;
  z-index: 4;
}

.scribbles {
  position: absolute;
  inset: 0;
  width: 2732px;
  height: 1810px;
  pointer-events: none;
  z-index: 5;
  fill: none;
  stroke: #ea4850;
  stroke-width: 11;
  stroke-linecap: round;
  stroke-linejoin: round;
}
</style>

<style>
html,
body {
  margin: 0;
  background: #eee;
}
.app-icon {
  display: block;
  flex: none;
}
</style>
